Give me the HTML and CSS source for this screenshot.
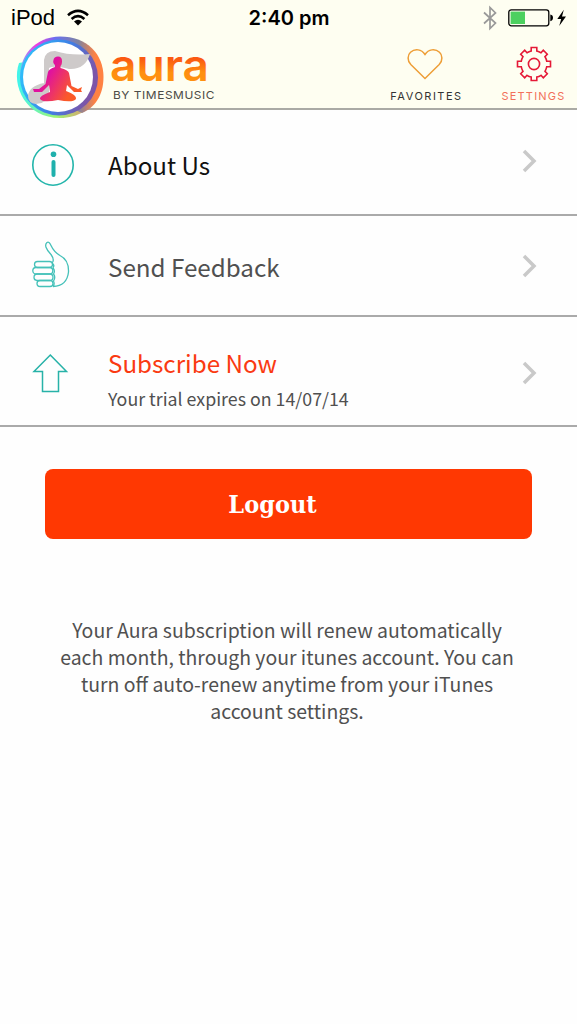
FILE: index.html
```
<!DOCTYPE html>
<html lang="en">
<head>
    <meta charset="UTF-8">
    <meta name="viewport" content="width=device-width, initial-scale=1.0">
    <title>Aura - Settings</title>
    <link rel="stylesheet" href="styles.css">
</head>
<body>
    <header class="header">
        <div class="status-bar">
            <div class="status-left">
                <span>iPod</span>
                <svg class="wifi" width="22" height="16" viewBox="0 0 22 16">
                    <path d="M1 5.2Q11 -3.4 21 5.2M4.6 9Q11 3.4 17.4 9" fill="none" stroke="#000" stroke-width="2.6"/>
                    <path d="M7 11.4Q11 8 15 11.4L11 15.6Z"/>
                </svg>
            </div>
            <div class="status-time">2:40 pm</div>
            <div class="status-right">
                <svg width="14" height="24" viewBox="0 0 14 24">
                    <path d="M1 6.5L12.5 17L7 22.5V1.5L12.5 7L1 17.5" fill="none" stroke="#999" stroke-width="1.7"/>
                </svg>
                <svg width="59" height="18" viewBox="0 0 59 18">
                    <rect x=".8" y=".8" width="40" height="16" rx="2.5" fill="none" stroke="#000" stroke-width="1.3"/>
                    <rect x="2.6" y="2.6" width="14.4" height="12.4" fill="#4cd05f"/>
                    <path d="M42.3 5.5Q45 6 45 8.8T42.3 12.2Z"/>
                    <path d="M55.8 .8L49.3 10H53.2L51.2 17L58 7.5H54Z"/>
                </svg>
            </div>
        </div>
        <div class="nav">
            <div class="brand">
                <svg class="emblem" width="92" height="84" viewBox="0 0 92 84">
                    <defs>
                        <linearGradient id="ring" x1="0" y1="0" x2="1" y2="0">
                            <stop offset="0" stop-color="#7ea6ff"/>
                            <stop offset=".2" stop-color="#f03be0"/>
                            <stop offset=".42" stop-color="#6a70f0"/>
                            <stop offset=".7" stop-color="#7f83a0"/>
                            <stop offset=".9" stop-color="#ff8243"/>
                        </linearGradient>
                        <linearGradient id="ringLow" x1="0" y1="0" x2="1" y2="0">
                            <stop offset="0" stop-color="#3ff4ee"/>
                            <stop offset=".5" stop-color="#a0f570"/>
                            <stop offset="1" stop-color="#f17e70"/>
                        </linearGradient>
                        <linearGradient id="ringInner" x1="0" y1="0" x2="1" y2=".3">
                            <stop offset="0" stop-color="#2aceff"/>
                            <stop offset=".6" stop-color="#3d80e7"/>
                            <stop offset="1" stop-color="#7c55a8"/>
                        </linearGradient>
                        <linearGradient id="figure" gradientUnits="userSpaceOnUse" x1="36" y1="36" x2="60" y2="50">
                            <stop offset="0" stop-color="#e0129f"/>
                            <stop offset="1" stop-color="#fb5a28"/>
                        </linearGradient>
                    </defs>
                    <path d="M5 27C-3 50 12 82 46 82C64 82 79 73 83 58L45 20Z" fill="url(#ringLow)"/>
                    <path d="M7 48C2 20 22 .5 46 .5C73 .5 89.500 18 89.500 41C89.500 60 80 72 68 77Z" fill="url(#ring)"/>
                    <ellipse cx="45" cy="41.500" rx="39" ry="38" fill="url(#ringInner)"/>
                    <ellipse cx="44" cy="41" rx="35" ry="35" fill="#fff"/>
                    <path d="M30 59V24Q31 15 41 15Q57 20 76 18Q71 34 55 33Q40 29 35 32V57Q33 68 22 68Q14 67 14 60Q15 50 30 47Z" fill="#cecaca"/>
                    <path d="M41 31V29Q38.500 27 39.500 24Q40 20.500 44 20.500Q48 20.500 48 25Q48 29 46.500 30V32Q54 34 55 37L57.500 50L64 53L68 51L67 54L68 56L60 56L53 49L52 55Q63 59 62 63Q59 67 44 64Q29 67 26 63Q25 60 36 56L35 49L28 56L20 56L19 53L25 53L31.500 48L34 36Q35 33 41 31Z" fill="url(#figure)"/>
                </svg>
                <svg class="wordmark" width="110" height="52" viewBox="0 0 110 52">
                    <defs>
                        <linearGradient id="word" x1="0" y1="0" x2="0" y2="1">
                            <stop offset=".4" stop-color="#fb5a12"/>
                            <stop offset=".65" stop-color="#ff9010"/>
                        </linearGradient>
                    </defs>
                    <text class="word" x="0" y="30.500" textLength="99" lengthAdjust="spacingAndGlyphs" fill="url(#word)">aura</text>
                    <text class="byline" x="3" y="48.500" textLength="102" lengthAdjust="spacingAndGlyphs">BY TIMESMUSIC</text>
                </svg>
            </div>
            <div class="nav-item favorites">
                <svg width="38" height="36" viewBox="0 0 38 36">
                    <path d="M19 32.500L4.800 18.500C1 14.500 1.500 9 4.500 6.300C9 2.200 15.500 3.200 19 8.500C22.500 3.200 29 2.200 33.500 6.300C36.500 9 37 14.500 33.200 18.500Z" fill="none" stroke="#ee9e37" stroke-width="1.500"/>
                </svg>
                <span>FAVORITES</span>
            </div>
            <div class="nav-item settings">
                <svg width="38" height="36" viewBox="0 0 38 36">
                    <g fill="none" stroke="#e51937" stroke-width="1.600">
                        <path d="M16.2 1.500H21.800V5Q24 5.500 26 6.700L28.300 4.200L32.300 8.200L30 10.700Q31.300 12.700 31.700 15.200H35.500V20.800H31.700Q31.200 23.200 30 25.300L32.300 27.800L28.300 31.800L26 29.300Q24 30.600 21.800 31V34.500H16.200V31Q14 30.600 12 29.300L9.700 31.800L5.700 27.800L8 25.300Q6.700 23.200 6.300 20.800H2.500V15.200H6.300Q6.800 12.700 8 10.700L5.700 8.200L9.700 4.200L12 6.700Q14 5.500 16.200 5Z"/>
                        <circle cx="19" cy="18" r="5.600"/>
                    </g>
                </svg>
                <span>SETTINGS</span>
            </div>
        </div>
    </header>

    <main>
        <div class="row about">
            <svg class="row-icon" width="44" height="44" viewBox="0 0 44 44">
                <circle cx="22" cy="22" r="20.200" fill="none" stroke="#23b5ab" stroke-width="1.600"/>
                <circle cx="22.500" cy="11.300" r="2.800" fill="#1fb0ac"/>
                <path d="M22.500 19V32" stroke="#1fb0ac" stroke-width="4" stroke-linecap="round"/>
            </svg>
            <div class="row-text"><h2>About Us</h2></div>
            <svg class="chevron" width="18" height="24" viewBox="0 0 18 24"><path d="M3 2L13 12L3 22"/></svg>
        </div>
        <div class="row feedback">
            <svg class="row-icon" width="44" height="50" viewBox="0 0 44 50">
                <g fill="none" stroke="#45c1b9" stroke-width="1.300">
                    <rect x="3.500" y="21.500" width="18" height="6" rx="3"/>
                    <rect x="1.800" y="27.500" width="20" height="6.500" rx="3.200"/>
                    <rect x="3" y="34" width="19" height="6.500" rx="3.200"/>
                    <rect x="6" y="40.500" width="16" height="6" rx="3"/>
                    <path d="M21 23Q24 20 20 14.500Q12 6 16 2.500Q18 1 20 5.500Q23 12 29 15.500Q38 20 37.500 32Q36 46 22 46.500M21 23Q24 25 22 28Q24.500 31 22.500 34Q25 37 22.500 41Q24 44 22 46.500"/>
                </g>
            </svg>
            <div class="row-text"><h2>Send Feedback</h2></div>
            <svg class="chevron" width="18" height="24" viewBox="0 0 18 24"><path d="M3 2L13 12L3 22"/></svg>
        </div>
        <div class="row subscribe">
            <svg class="row-icon" width="44" height="44" viewBox="0 0 44 44">
                <path d="M19.300 3L35.500 19.500H27.500V39.500H11.500V19.500H3Z" fill="none" stroke="#27b2a8" stroke-width="1.500"/>
            </svg>
            <div class="row-text">
                <h2>Subscribe Now</h2>
                <p>Your trial expires on 14/07/14</p>
            </div>
            <svg class="chevron" width="18" height="24" viewBox="0 0 18 24"><path d="M3 2L13 12L3 22"/></svg>
        </div>

        <button class="logout">Logout</button>

        <p class="note">Your Aura subscription will renew automatically<br>each month, through your itunes account. You can<br>turn off auto-renew anytime from your iTunes<br>account settings.</p>
    </main>
</body>
</html>
```
FILE: styles.css
```
* {
    margin: 0;
    padding: 0;
    box-sizing: border-box;
}

body {
    font-family: "Noto Sans CJK SC", "Open Sans", sans-serif;
    background-color: #fefefe;
    color: #505050;
    min-height: 100vh;
}

svg {
    display: block;
    flex: none;
    overflow: visible;
}

.header {
    height: 110px;
    background-color: #fefef1;
    border-bottom: 2px solid #aaaaa5;
}

/* device status bar */
.status-bar {
    display: grid;
    grid-template-columns: 1fr auto 1fr;
    align-items: center;
    height: 36px;
    padding: 0 10px 0 11px;
    font-family: "Liberation Sans", Arial, sans-serif;
    font-size: 22px;
    color: #000;
}

.status-left,
.status-right {
    display: flex;
    align-items: center;
    gap: 12px;
}

.status-right {
    justify-content: flex-end;
    gap: 11px;
}

.status-time {
    font-family: Inter, sans-serif;
    font-weight: 600;
    font-size: 20px;
}

/* logo and tabs */
.nav {
    display: flex;
    height: 72px;
    padding-left: 14px;
}

.brand {
    display: flex;
    flex: none;
    width: 369px;
    gap: 4px;
}

.wordmark {
    margin-top: 14px;
}

.word {
    font-family: Inter, sans-serif;
    font-size: 44px;
    font-weight: 600;
}

.byline {
    font-family: Inter, sans-serif;
    font-size: 11px;
    letter-spacing: 0.5px;
    fill: #4c4c48;
}

.nav-item {
    display: flex;
    flex: none;
    flex-direction: column;
    align-items: center;
    width: 87px;
    padding-top: 10px;
    font-family: Inter, sans-serif;
    font-size: 11px;
    line-height: 14px;
    letter-spacing: 1.5px;
    color: #333;
}

.nav-item span {
    margin-top: 7px;
}

.favorites {
    margin-right: 20px;
}

.favorites svg {
    margin-right: 4px;
}

.settings {
    letter-spacing: 1.2px;
    color: #f2705a;
}

/* list */
.row {
    display: flex;
    border-bottom: 2px solid #aaa;
    padding: 0 38px 0 31px;
}

.row h2 {
    font-size: 24.2px;
    font-weight: 400;
    line-height: 36px;
}

.row-text {
    flex: 1;
    margin-left: 33px;
}

.chevron path {
    fill: none;
    stroke: #c9c9c9;
    stroke-width: 3.5;
}

.about {
    height: 106px;
    padding-top: 33px;
}

.about h2 {
    margin-top: 4px;
    color: #111;
}

.about .chevron {
    margin-top: 6px;
}

.feedback {
    height: 101px;
    padding-top: 24px;
}

.feedback h2 {
    margin-top: 9px;
}

.feedback .chevron {
    margin-top: 14px;
}

.subscribe {
    height: 110px;
    padding-top: 29px;
}

.subscribe .row-icon {
    margin-top: 6px;
}

.subscribe h2 {
    margin-top: -1px;
    color: #fa3a12;
}

.subscribe p {
    font-size: 17.8px;
    line-height: 34px;
}

.subscribe .chevron {
    margin-top: 15px;
}

.logout {
    display: block;
    width: 487px;
    height: 70px;
    margin: 42px 0 0 45px;
    padding-right: 32px;
    border: none;
    border-radius: 8px;
    background-color: #ff3802;
    color: #fff;
    font-family: "DejaVu Serif", serif;
    font-stretch: condensed;
    font-size: 25px;
    font-weight: 700;
}

.note {
    margin-top: 77px;
    padding-right: 3px;
    font-size: 19.45px;
    line-height: 27px;
    text-align: center;
}
```
